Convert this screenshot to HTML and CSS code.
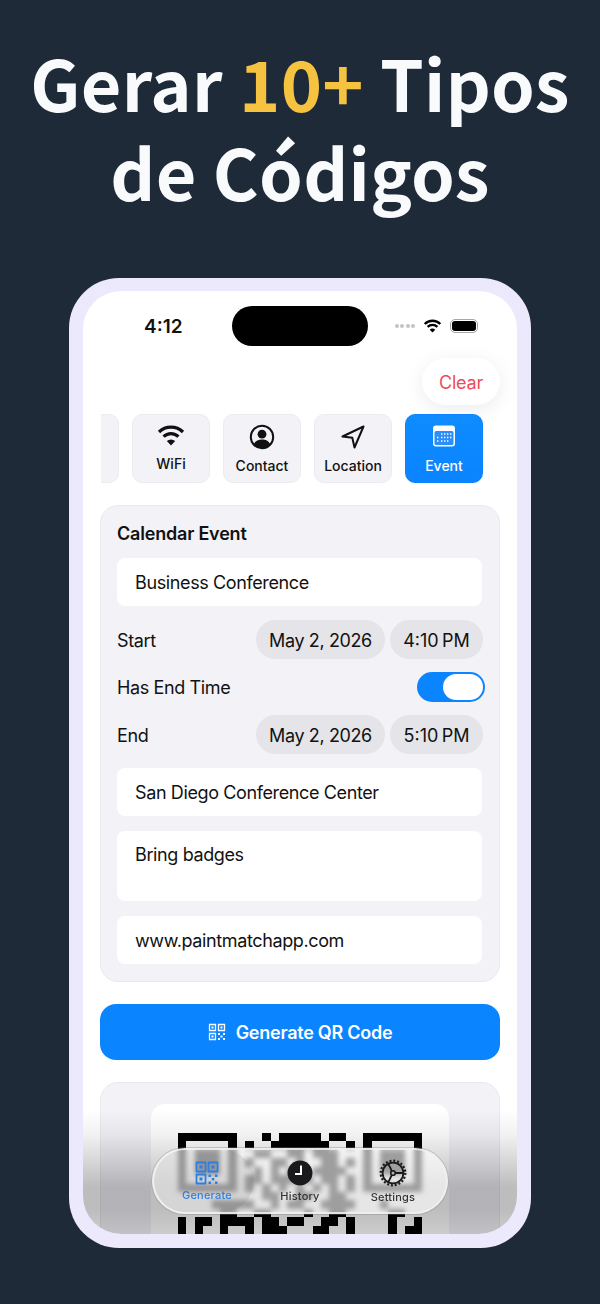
FILE: index.html
```html
<!DOCTYPE html>
<html lang="pt">
<head>
    <meta charset="UTF-8">
    <meta name="viewport" content="width=device-width, initial-scale=1.0">
    <title>Gerar 10+ Tipos de Códigos</title>
    <link rel="stylesheet" href="styles.css">
</head>
<body>
    <h1 class="headline">Gerar <span class="headline-accent">10+</span> Tipos<br>de Códigos</h1>

    <div class="phone">
        <div class="screen">
            <div class="status-bar">
                <span class="status-time">4:12</span>
                <div class="island"></div>
                <div class="status-icons">
                    <span class="signal-dots"><i></i><i></i><i></i><i></i></span>
                    <svg class="status-wifi" viewBox="0 0 24 18" width="19" height="14">
                        <path d="M2 6.5a14 14 0 0 1 20 0M5.7 10.2a9 9 0 0 1 12.6 0" fill="none" stroke="#000" stroke-width="3"/>
                        <path d="M12 17.5l-3.6-3.8a5 5 0 0 1 7.2 0z" fill="#000"/>
                    </svg>
                    <span class="battery"><span class="battery-fill"></span></span>
                </div>
            </div>

            <div class="toolbar">
                <button class="clear-button">Clear</button>
            </div>

            <div class="type-tabs">
                <div class="type-tab"></div>
                <div class="type-tab">
                    <svg viewBox="0 0 28 22" width="28" height="22">
                        <path d="M2 8a17 17 0 0 1 24 0M6.6 12.6a10.5 10.5 0 0 1 14.8 0" fill="none" stroke="#111" stroke-width="3.2"/>
                        <path d="M14 21.5l-4.2-4.4a6 6 0 0 1 8.4 0z" fill="#111"/>
                    </svg>
                    <span class="type-label label-low">WiFi</span>
                </div>
                <div class="type-tab">
                    <svg viewBox="0 0 26 26" width="26" height="26">
                        <circle cx="13" cy="13" r="11.2" fill="none" stroke="#111" stroke-width="2"/>
                        <circle cx="13" cy="10.2" r="4.4" fill="#111"/>
                        <path d="M4.8 20.2c1.6-3.6 4.6-4.8 8.2-4.8s6.600 1.200 8.200 4.800a11 11 0 0 1-16.400 0z" fill="#111"/>
                    </svg>
                    <span class="type-label">Contact</span>
                </div>
                <div class="type-tab">
                    <svg viewBox="0 0 26 26" width="26" height="26">
                        <path d="M23.500 2.500L2.500 12.500l9.800 1.300 2.200 9.700z" fill="none" stroke="#111" stroke-width="2" stroke-linejoin="round"/>
                    </svg>
                    <span class="type-label">Location</span>
                </div>
                <div class="type-tab type-tab-active">
                    <svg viewBox="0 0 26 24" width="26" height="24">
                        <rect x="2" y="1.500" width="22" height="21" rx="3" fill="#fff"/>
                        <rect x="3.500" y="7" width="19" height="14" rx="1.500" fill="#2a8ffb"/>
                        <path d="M10 10h1.400M13 10h1.400M16 10h1.400M19 10h1.400M6 13.500h1.400M10 13.500h1.400M13 13.500h1.400M16 13.500h1.400M19 13.500h1.400M6 17h1.400M10 17h1.400M13 17h1.400M16 17h1.400" stroke="#fff" stroke-width="1.400"/>
                    </svg>
                    <span class="type-label">Event</span>
                </div>
            </div>

            <div class="form-card">
                <div class="form-title">Calendar Event</div>
                <div class="field">Business Conference</div>
                <div class="form-row">
                    <span class="row-label">Start</span>
                    <div class="pickers">
                        <span class="picker picker-date">May 2, 2026</span>
                        <span class="picker picker-time">4:10&thinsp;PM</span>
                    </div>
                </div>
                <div class="form-row form-row-toggle">
                    <span>Has End Time</span>
                    <span class="toggle"><span class="toggle-knob"></span></span>
                </div>
                <div class="form-row">
                    <span class="row-label">End</span>
                    <div class="pickers">
                        <span class="picker picker-date">May 2, 2026</span>
                        <span class="picker picker-time">5:10&thinsp;PM</span>
                    </div>
                </div>
                <div class="field">San Diego Conference Center</div>
                <div class="field field-notes">Bring badges</div>
                <div class="field">www.paintmatchapp.com</div>
            </div>

            <button class="generate-button">
                <svg viewBox="0 0 18 18" width="18" height="18">
                    <path d="M1.500 1.500h6v6h-6zM10.500 1.500h6v6h-6zM1.500 10.500h6v6h-6z" fill="none" stroke="#fff" stroke-width="1.300"/>
                    <path d="M3.500 3.500h2v2h-2zM12.500 3.500h2v2h-2zM3.500 12.500h2v2h-2zM10 10h2v2h-2zM15 10h2v2h-2zM12.500 12.500h2v2h-2zM10 15h2v2h-2zM15 15h2v2h-2z" fill="#fff"/>
                </svg>
                Generate QR Code
            </button>

            <div class="result-card">
                <div class="qr-card">
                    <svg class="qr" viewBox="0 0 29 12" width="244" height="101" shape-rendering="crispEdges">
                        <path d="M0 0h7v1h-7zM10 0h1v1h-1zM12 0h5v1h-5zM18 0h2v1h-2zM22 0h7v1h-7z
                                 M0 1h1v1h-1zM6 1h1v1h-1zM8 1h1v1h-1zM11 1h7v1h-7zM20 1h1v1h-1zM22 1h1v1h-1zM28 1h1v1h-1z
                                 M0 2h1v1h-1zM2 2h3v1h-3zM6 2h1v1h-1zM9 2h2v1h-2zM13 2h2v1h-2zM16 2h3v1h-3zM22 2h1v1h-1zM24 2h3v1h-3zM28 2h1v1h-1z
                                 M0 3h1v1h-1zM2 3h3v1h-3zM6 3h1v1h-1zM8 3h1v1h-1zM11 3h2v1h-2zM14 3h1v1h-1zM17 3h2v1h-2zM20 3h1v1h-1zM22 3h1v1h-1zM24 3h3v1h-3zM28 3h1v1h-1z
                                 M0 4h1v1h-1zM2 4h3v1h-3zM6 4h1v1h-1zM9 4h1v1h-1zM11 4h1v1h-1zM13 4h2v1h-2zM16 4h4v1h-4zM22 4h1v1h-1zM24 4h3v1h-3zM28 4h1v1h-1z
                                 M0 5h1v1h-1zM6 5h1v1h-1zM8 5h2v1h-2zM11 5h3v1h-3zM15 5h1v1h-1zM17 5h2v1h-2zM20 5h1v1h-1zM22 5h1v1h-1zM28 5h1v1h-1z
                                 M0 6h7v1h-7zM8 6h1v1h-1zM10 6h1v1h-1zM12 6h1v1h-1zM14 6h1v1h-1zM16 6h1v1h-1zM18 6h1v1h-1zM20 6h1v1h-1zM22 6h7v1h-7z
                                 M10 7h2v1h-2zM14 7h2v1h-2zM18 7h2v1h-2z
                                 M4 8h5v1h-5zM11 8h1v1h-1zM13 8h2v1h-2zM17 8h4v1h-4zM24 8h1v1h-1z
                                 M5 9h2v1h-2zM9 9h2v1h-2zM15 9h1v1h-1zM18 9h2v1h-2zM25 9h2v1h-2z
                                 M0 10h1v1h-1zM2 10h2v1h-2zM5 10h4v1h-4zM10 10h2v1h-2zM13 10h2v1h-2zM17 10h2v1h-2zM20 10h1v1h-1zM25 10h1v1h-1zM28 10h1v1h-1z
                                 M0 11h1v1h-1zM2 11h1v1h-1zM5 11h1v1h-1zM8 11h1v1h-1zM10 11h3v1h-3zM16 11h2v1h-2zM20 11h1v1h-1zM25 11h1v1h-1zM27 11h2v1h-2z"/>
                    </svg>
                </div>
            </div>

            <div class="bottom-fade"></div>

            <div class="tab-bar">
                <div class="tab-selected"></div>
                <div class="tab-item tab-item-active">
                    <svg viewBox="0 0 24 24" width="24" height="24">
                        <path d="M1.500 1.500h9v9h-9zM13.500 1.500h9v9h-9zM1.500 13.500h9v9h-9z" fill="none" stroke="#2f7fe0" stroke-width="1.800" stroke-linejoin="round"/>
                        <path d="M4.500 4.500h3v3h-3zM16.500 4.500h3v3h-3zM4.500 16.500h3v3h-3zM13.500 13.500h2.500v2.500h-2.500zM20 13.500h2.500v2.500h-2.500zM16.800 17h2.500v2.500h-2.500zM13.500 20.500h2.500v2.500h-2.500zM20 20.500h2.500v2.500h-2.500z" fill="#2f7fe0"/>
                    </svg>
                    <span>Generate</span>
                </div>
                <div class="tab-item">
                    <svg viewBox="0 0 26 26" width="26" height="26">
                        <circle cx="13" cy="13" r="12.500" fill="#1a1a1c"/>
                        <path d="M14 5.500v8.500h-6" fill="none" stroke="#fff" stroke-width="2"/>
                    </svg>
                    <span>History</span>
                </div>
                <div class="tab-item">
                    <svg viewBox="0 0 28 28" width="28" height="28">
                        <circle cx="14" cy="14" r="12.300" fill="none" stroke="#1a1a1c" stroke-width="2.200" stroke-dasharray="2 1.860"/>
                        <circle cx="14" cy="14" r="10.400" fill="none" stroke="#1a1a1c" stroke-width="1.800"/>
                        <circle cx="14" cy="14" r="2.300" fill="none" stroke="#1a1a1c" stroke-width="1.600"/>
                        <path d="M14 4v7.700M12 15.200l-7.800 3.800M16 15.200l7.800 3.800" transform="rotate(90 14 14)" fill="none" stroke="#1a1a1c" stroke-width="1.800"/>
                    </svg>
                    <span>Settings</span>
                </div>
            </div>
        </div>
    </div>
</body>
</html>
```

FILE: styles.css
```css
body {
    margin: 0;
    height: 1304px;
    overflow: hidden;
    background-color: #1e2a38;
    font-family: "Inter", "Liberation Sans", sans-serif;
    color: #111;
}
button {
    font-family: inherit;
    border: none;
}

/* headline */
.headline {
    margin: 0;
    padding-top: 37px;
    height: 238px;
    box-sizing: border-box;
    text-align: center;
    font-family: "Noto Sans CJK SC", "Noto Sans", sans-serif;
    font-size: 70px;
    font-weight: 700;
    line-height: 89px;
    letter-spacing: 0.3px;
    color: #f8fafc;
}
.headline-accent {
    color: #f5c33f;
}

/* phone frame */
.phone {
    width: 462px;
    height: 970px;
    box-sizing: border-box;
    margin: 40px auto 0;
    padding: 13px 14px 14px;
    background: #ece9fc;
    border-radius: 50px;
}
.screen {
    position: relative;
    height: 943px;
    overflow: hidden;
    background: #fff;
    border-radius: 38px;
}

/* status bar */
.status-bar {
    display: flex;
    align-items: center;
    height: 40px;
    padding-top: 15px;
}
.status-time {
    width: 149px;
    padding-left: 61px;
    box-sizing: border-box;
    font-size: 19px;
    font-weight: 600;
}
.island {
    width: 136px;
    height: 40px;
    background: #000;
    border-radius: 20px;
}
.status-icons {
    display: flex;
    align-items: center;
    margin-left: 27px;
}
.signal-dots {
    display: flex;
    gap: 1.300px;
    margin-right: 8px;
}
.signal-dots i {
    width: 4px;
    height: 4px;
    background: #c4c4c4;
    border-radius: 50%;
}
.battery {
    display: block;
    width: 28px;
    height: 14px;
    box-sizing: border-box;
    margin-left: 8px;
    padding: 1px;
    border: 1.500px solid #a8a8a8;
    border-radius: 5px;
}
.battery-fill {
    display: block;
    height: 100%;
    background: #000;
    border-radius: 3px;
}

/* clear */
.toolbar {
    display: flex;
    justify-content: flex-end;
    margin-top: 12px;
    padding-right: 17px;
}
.clear-button {
    width: 78px;
    height: 47px;
    padding-top: 3px;
    background: #fff;
    border-radius: 24px;
    box-shadow: 0 4px 20px rgba(0, 0, 0, 0.08);
    font-size: 18px;
    letter-spacing: -0.2px;
    color: #eb4d55;
}

/* type tabs */
.type-tabs {
    display: flex;
    justify-content: flex-end;
    gap: 13px;
    margin: 9px 0 0 18px;
    padding-right: 34px;
    overflow: hidden;
}
.type-tab {
    flex-shrink: 0;
    display: flex;
    flex-direction: column;
    align-items: center;
    justify-content: space-between;
    width: 78px;
    height: 69px;
    box-sizing: border-box;
    padding: 9px 0 8px;
    background: #f2f2f7;
    border: 1px solid #ebebf0;
    border-radius: 10px;
}
.type-label {
    font-size: 14px;
    font-weight: 500;
    line-height: 17px;
}
.label-low {
    margin-bottom: 2px;
}
.type-tab-active {
    background: linear-gradient(#0f8cff, #0a84ff);
    border-color: #0a84ff;
    color: #fff;
}

/* form */
.form-card {
    display: flex;
    flex-direction: column;
    gap: 14px;
    margin: 22px 17px 0;
    padding: 15px 17px 17px 16px;
    background: #f2f2f7;
    border: 1px solid #e8e8ed;
    border-radius: 18px;
    font-size: 18px;
    letter-spacing: -0.38px;
}
.form-title {
    height: 24px;
    line-height: 26px;
    margin-bottom: -1px;
    font-weight: 600;
    letter-spacing: -0.2px;
}
.field {
    height: 48px;
    box-sizing: border-box;
    padding: 1px 18px 0;
    line-height: 48px;
    background: #fff;
    border-radius: 8px;
}
.field-notes {
    height: 70px;
    margin: 1px 0;
    line-height: 46px;
}
.form-row {
    display: flex;
    align-items: center;
    justify-content: space-between;
    height: 39px;
}
.form-row-toggle {
    height: 28px;
}
.row-label {
    margin-top: 2px;
}
.pickers {
    display: flex;
    gap: 5px;
    margin-right: -1px;
}
.picker {
    height: 39px;
    line-height: 41px;
    text-align: center;
    background: #e4e4e9;
    border-radius: 20px;
}
.picker-date {
    width: 129px;
}
.picker-time {
    width: 93px;
    letter-spacing: 0;
}
.toggle {
    display: flex;
    justify-content: flex-end;
    flex-shrink: 0;
    width: 68px;
    height: 30px;
    box-sizing: border-box;
    margin-right: -3px;
    padding: 2px;
    background: #0a84ff;
    border-radius: 15px;
}
.toggle-knob {
    width: 40px;
    height: 26px;
    background: #fff;
    border-radius: 13px;
}

/* generate */
.generate-button {
    display: flex;
    align-items: center;
    justify-content: center;
    gap: 10px;
    width: 400px;
    height: 56px;
    margin: 22px 17px 0;
    background: #0a84ff;
    border-radius: 16px;
    font-size: 18px;
    font-weight: 600;
    letter-spacing: -0.25px;
    color: #fff;
}

/* result */
.result-card {
    height: 300px;
    box-sizing: border-box;
    margin: 22px 17px 0;
    padding: 21px 50px 0;
    background: #f2f2f7;
    border: 1px solid #e8e8ed;
    border-radius: 18px;
}
.qr-card {
    height: 280px;
    padding: 29px 0 0 27px;
    box-sizing: border-box;
    background: #fff;
    border-radius: 14px;
}
.qr {
    display: block;
}
.bottom-fade {
    position: absolute;
    left: 0;
    right: 0;
    bottom: 0;
    height: 125px;
    background: linear-gradient(rgba(0, 0, 0, 0), rgba(0, 0, 0, 0.05) 20%, rgba(0, 0, 0, 0.26) 62%, rgba(0, 0, 0, 0.26) 80%, rgba(0, 0, 0, 0.2));
}

/* tab bar */
.tab-bar {
    position: absolute;
    left: 69px;
    top: 857px;
    display: grid;
    grid-template-columns: repeat(3, 93px);
    justify-content: center;
    align-items: center;
    width: 296px;
    height: 66px;
    box-sizing: border-box;
    overflow: hidden;
    background: rgba(255, 255, 255, 0.62);
    border: 2px solid rgba(240, 240, 240, 0.85);
    border-radius: 33px;
    -webkit-backdrop-filter: blur(2.500px);
    backdrop-filter: blur(2.500px);
    box-shadow: 0 0 0 1px rgba(130, 130, 130, 0.35);
}
.tab-selected {
    position: absolute;
    left: 0;
    top: 0;
    bottom: 0;
    width: 100px;
    background: rgba(90, 90, 90, 0.12);
    border-radius: 31px;
}
.tab-item {
    position: relative;
    display: flex;
    flex-direction: column;
    align-items: center;
    gap: 4px;
    font-size: 11px;
    font-weight: 500;
    line-height: 13px;
    letter-spacing: 0.2px;
    color: #333;
}
.tab-item-active {
    color: #2f7fe0;
}
```
